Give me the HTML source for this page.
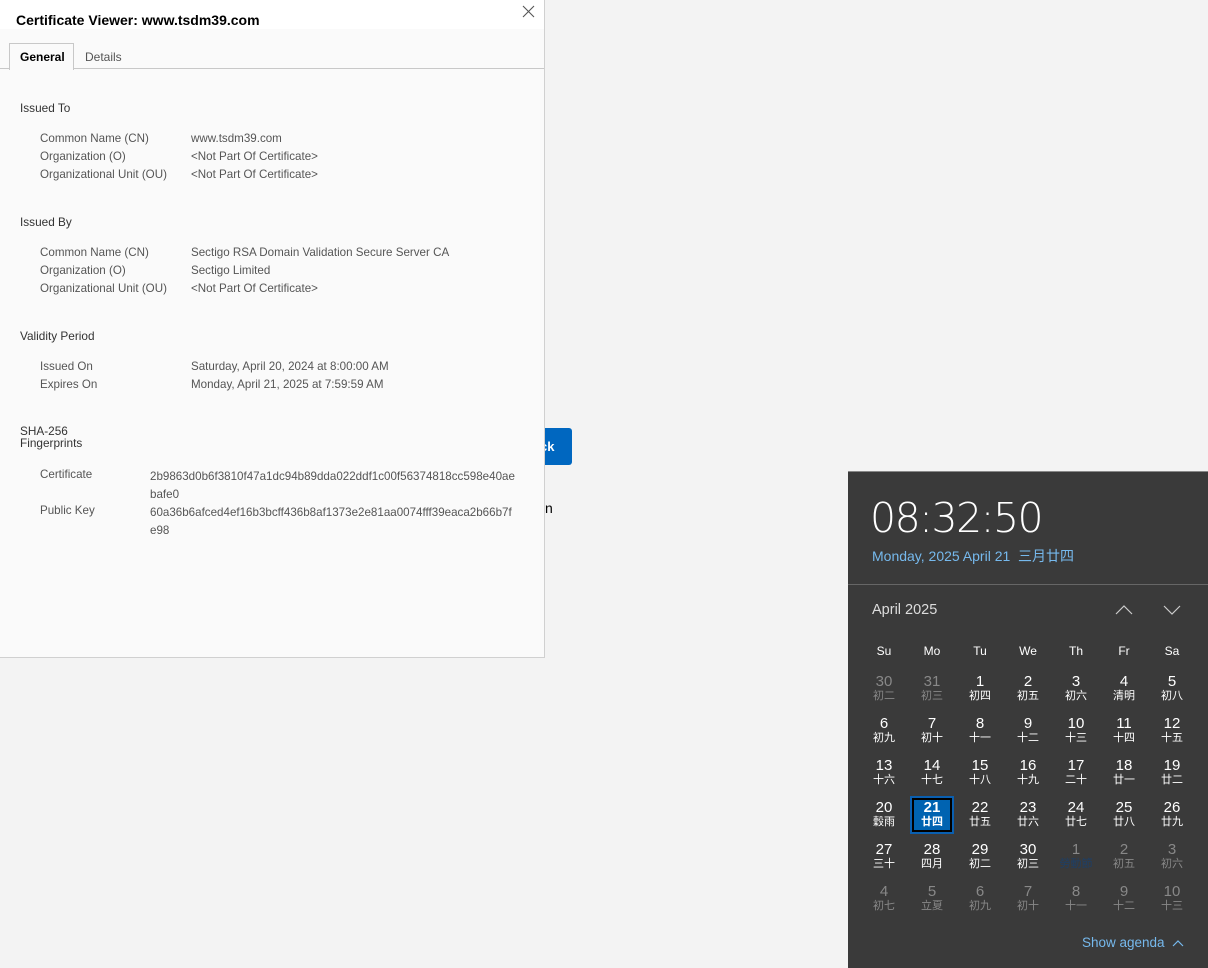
<!DOCTYPE html>
<html><head><meta charset="utf-8"><style>
body{margin:0;width:1208px;height:967px;background:#f3f3f3;font-family:"Liberation Sans","Noto Sans CJK SC",sans-serif;position:relative;overflow:hidden}
.dlg{position:absolute;left:0;top:0;width:544px;height:657px;background:#fafafa;border-right:1px solid #d0d0d0;border-bottom:1px solid #d0d0d0}
.title{position:absolute;left:0;top:0;width:544px;height:29px;background:#fff}
.title b{position:absolute;left:16px;top:12px;font-size:14px;color:#000}
.tabs{position:absolute;left:0;top:68px;width:544px;border-top:1px solid #c8c8c8}
.tab{position:absolute;top:43px;font-size:12px}
.t{position:absolute;font-size:11.8px;color:#333}
.k{position:absolute;font-size:11.6px;color:#555}
.cal{position:absolute;left:848px;top:471px;width:360px;height:496px;background:#3a3a3a;border-top:1px solid #888;color:#fff}
.d{position:absolute;width:48px;text-align:center;font-size:15px;line-height:16px}
.d small{display:block;font-size:11px;line-height:13px}
.g{color:#888}
</style></head><body>
<div style="position:absolute;left:530px;top:428px;width:42px;height:37px;background:#0067c0;border-radius:3px;color:#fff;font-size:13px;font-weight:bold;line-height:37px;text-indent:10px">ck</div>
<div style="position:absolute;left:545px;top:500px;font-size:14px">n</div>
<div class="dlg">
<div class="title"><b>Certificate Viewer: www.tsdm39.com</b>
<svg style="position:absolute;left:522px;top:5px" width="13" height="13"><path d="M1 1L12 12M12 1L1 12" stroke="#555" stroke-width="1.1"/></svg></div>
<div style="position:absolute;left:9px;top:43px;width:63px;height:26px;background:#fafafa;border:1px solid #c8c8c8;border-bottom:none;z-index:2"></div>
<div class="tabs"></div>
<div class="tab" style="left:20px;top:50px;font-weight:bold;z-index:3">General</div>
<div class="tab" style="left:85px;top:50px;color:#555">Details</div>
<div class="t" style="left:20px;top:101px">Issued To</div>
<div class="k" style="left:40px;top:132px">Common Name (CN)</div><div class="k" style="left:191px;top:132px">www.tsdm39.com</div>
<div class="k" style="left:40px;top:150px">Organization (O)</div><div class="k" style="left:191px;top:150px">&lt;Not Part Of Certificate&gt;</div>
<div class="k" style="left:40px;top:168px">Organizational Unit (OU)</div><div class="k" style="left:191px;top:168px">&lt;Not Part Of Certificate&gt;</div>
<div class="t" style="left:20px;top:215px">Issued By</div>
<div class="k" style="left:40px;top:246px">Common Name (CN)</div><div class="k" style="left:191px;top:246px">Sectigo RSA Domain Validation Secure Server CA</div>
<div class="k" style="left:40px;top:264px">Organization (O)</div><div class="k" style="left:191px;top:264px">Sectigo Limited</div>
<div class="k" style="left:40px;top:282px">Organizational Unit (OU)</div><div class="k" style="left:191px;top:282px">&lt;Not Part Of Certificate&gt;</div>
<div class="t" style="left:20px;top:329px">Validity Period</div>
<div class="k" style="left:40px;top:360px">Issued On</div><div class="k" style="left:191px;top:360px">Saturday, April 20, 2024 at 8:00:00 AM</div>
<div class="k" style="left:40px;top:378px">Expires On</div><div class="k" style="left:191px;top:378px">Monday, April 21, 2025 at 7:59:59 AM</div>
<div class="t" style="left:20px;top:425px;line-height:12px">SHA-256<br>Fingerprints</div>
<div class="k" style="left:40px;top:468px">Certificate</div><div class="k" style="left:150px;top:468px;line-height:18px">2b9863d0b6f3810f47a1dc94b89dda022ddf1c00f56374818cc598e40ae<br>bafe0</div>
<div class="k" style="left:40px;top:504px">Public Key</div><div class="k" style="left:150px;top:504px;line-height:18px">60a36b6afced4ef16b3bcff436b8af1373e2e81aa0074fff39eaca2b66b7f<br>e98</div>
</div>
<div class="cal">
<div style="position:absolute;left:22px;top:22px;font-size:41px;font-family:'DejaVu Sans','Liberation Sans',sans-serif;font-weight:200;letter-spacing:-1.5px">08:32:50</div>
<div style="position:absolute;left:24px;top:74px;font-size:14px;color:#76b9ed">Monday, 2025 April 21&nbsp;&nbsp;三月廿四</div>
<div style="position:absolute;left:0;top:112px;width:360px;border-top:1px solid #666"></div>
<div style="position:absolute;left:24px;top:130px;font-size:14.5px;color:#ddd">April 2025</div>
<svg style="position:absolute;left:267px;top:133px" width="18" height="10"><path d="M1 9L9 1L17 9" stroke="#ccc" stroke-width="1.2" fill="none"/></svg>
<svg style="position:absolute;left:315px;top:133px" width="18" height="10"><path d="M1 1L9 9L17 1" stroke="#ccc" stroke-width="1.2" fill="none"/></svg>
<div style="position:absolute;left:62px;top:324px;width:40px;height:34px;border:2px solid #0a5fb0;background:#0063b1;outline:2px solid #000;outline-offset:-4px"></div>
<div id="g"></div>
<div style="position:absolute;left:234px;top:463px;font-size:13.5px;color:#76b9ed">Show agenda</div>
<svg style="position:absolute;left:324px;top:468px" width="12" height="7"><path d="M1 6L6 1L11 6" stroke="#76b9ed" stroke-width="1.2" fill="none"/></svg>
</div>
<script>
var cal=document.querySelector('.cal');var h='';
var dn=['Su','Mo','Tu','We','Th','Fr','Sa'];
dn.forEach(function(n,i){h+='<div class="d" style="left:'+(12+i*48)+'px;top:171px;font-size:12px">'+n+'</div>'});
var c=[['30','初二',1],['31','初三',1],['1','初四'],['2','初五'],['3','初六'],['4','清明'],['5','初八'],
['6','初九'],['7','初十'],['8','十一'],['9','十二'],['10','十三'],['11','十四'],['12','十五'],
['13','十六'],['14','十七'],['15','十八'],['16','十九'],['17','二十'],['18','廿一'],['19','廿二'],
['20','穀雨'],['21','廿四'],['22','廿五'],['23','廿六'],['24','廿七'],['25','廿八'],['26','廿九'],
['27','三十'],['28','四月'],['29','初二'],['30','初三'],['1','勞動節',2],['2','初五',1],['3','初六',1],
['4','初七',1],['5','立夏',1],['6','初九',1],['7','初十',1],['8','十一',1],['9','十二',1],['10','十三',1]];
c.forEach(function(x,i){var col=i%7,row=Math.floor(i/7);
var st=x[2]?' g':'';var sub=x[2]==2?' style="color:#1e3f66"':'';
h+='<div class="d'+st+'" style="left:'+(12+col*48)+'px;top:'+(202+row*42)+'px'+(i==22?';font-weight:bold':'')+'">'+x[0]+'<small'+sub+'>'+x[1]+'</small></div>'});
document.getElementById('g').outerHTML=h;
</script>
</body></html>
